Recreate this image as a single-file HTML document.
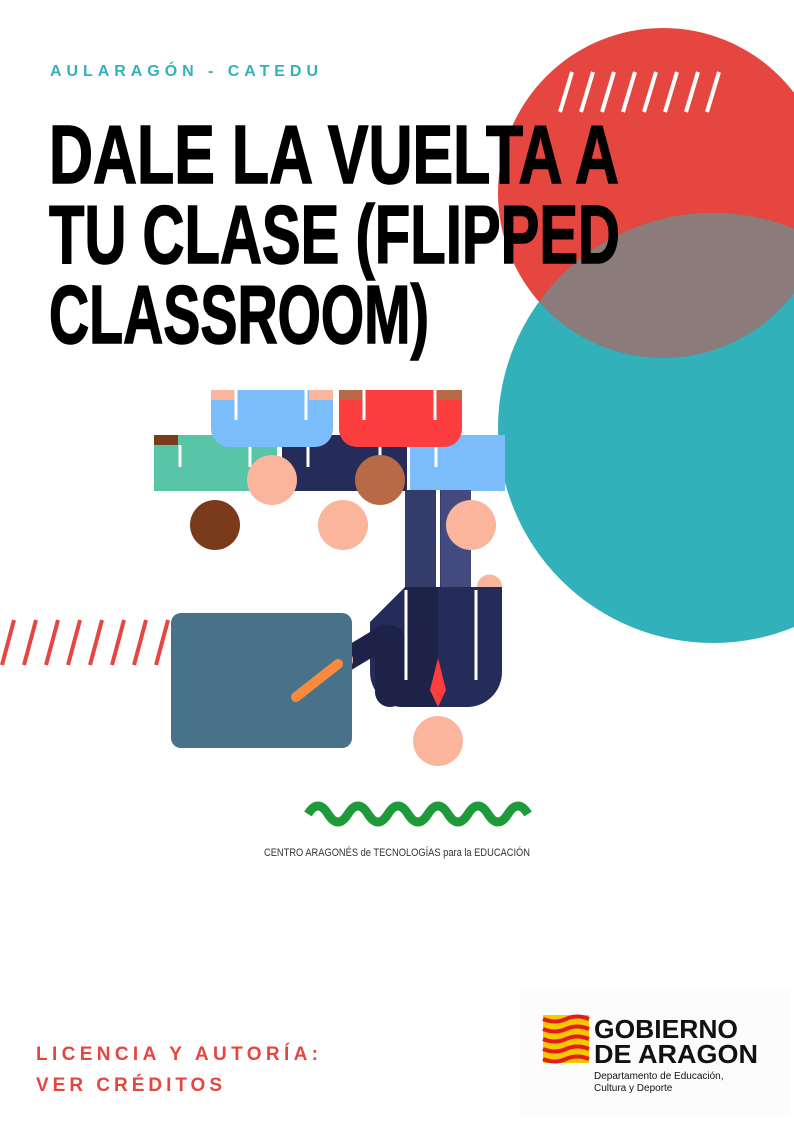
<!DOCTYPE html>
<html><head><meta charset="utf-8"><style>
body{margin:0;width:794px;height:1123px;overflow:hidden;background:#fff;font-family:"Liberation Sans",sans-serif}
</style></head><body>
<svg width="794" height="1123" viewBox="0 0 794 1123" style="position:absolute;left:0;top:0">
<defs><clipPath id="rc"><circle cx="663" cy="193" r="165"/></clipPath></defs>
<circle cx="663" cy="193" r="165" fill="#e5463f"/>
<circle cx="713" cy="428" r="215" fill="#33b1bb"/>
<circle cx="713" cy="428" r="215" fill="#8b7b7a" clip-path="url(#rc)"/>
<g stroke="#fff" stroke-width="4">
<line x1="560" y1="112" x2="572" y2="72"/><line x1="581" y1="112" x2="593" y2="72"/><line x1="602" y1="112" x2="614" y2="72"/><line x1="623" y1="112" x2="635" y2="72"/><line x1="644" y1="112" x2="656" y2="72"/><line x1="665" y1="112" x2="677" y2="72"/><line x1="686" y1="112" x2="698" y2="72"/><line x1="707" y1="112" x2="719" y2="72"/>
</g>
<g stroke="#e5463f" stroke-width="4">
<line x1="2" y1="665" x2="14" y2="620"/><line x1="24" y1="665" x2="36" y2="620"/><line x1="46" y1="665" x2="58" y2="620"/><line x1="68" y1="665" x2="80" y2="620"/><line x1="90" y1="665" x2="102" y2="620"/><line x1="112" y1="665" x2="124" y2="620"/><line x1="134" y1="665" x2="146" y2="620"/><line x1="156" y1="665" x2="168" y2="620"/><line x1="178" y1="665" x2="190" y2="620"/>
</g>
<text x="50" y="76" font-size="16" font-weight="bold" fill="#33b1bb" textLength="268" lengthAdjust="spacing">AULARAGÓN - CATEDU</text>
<g font-family="Liberation Sans, sans-serif" font-weight="bold" fill="#000" stroke="#000" stroke-width="1.5">
<text x="49" y="183" font-size="83" textLength="570" lengthAdjust="spacingAndGlyphs">DALE LA VUELTA A</text>
<text x="49" y="263" font-size="83" textLength="571" lengthAdjust="spacingAndGlyphs">TU CLASE (FLIPPED</text>
<text x="49" y="343" font-size="83" textLength="380" lengthAdjust="spacingAndGlyphs">CLASSROOM)</text>
</g>
<rect x="154" y="435" width="123" height="56" fill="#57c5a6"/><rect x="154" y="435" width="24" height="10" fill="#7a3b1c"/>
<rect x="282" y="435" width="125" height="56" fill="#262c5a"/>
<rect x="410" y="435" width="95" height="56" fill="#7bbcfb"/>
<rect x="211" y="390" width="122" height="57" rx="18" fill="#7bbcfb"/><rect x="211" y="390" width="122" height="20" fill="#7bbcfb"/>
<rect x="211" y="390" width="24" height="10" fill="#fbb59c"/><rect x="309" y="390" width="24" height="10" fill="#fbb59c"/>
<rect x="339" y="390" width="123" height="57" rx="18" fill="#fd3e3e"/><rect x="339" y="390" width="123" height="20" fill="#fd3e3e"/>
<rect x="339" y="390" width="24" height="10" fill="#b86a47"/><rect x="438" y="390" width="24" height="10" fill="#b86a47"/>
<g stroke="#fff" stroke-width="3"><line x1="236" y1="390" x2="236" y2="420"/><line x1="306" y1="390" x2="306" y2="420"/><line x1="364" y1="390" x2="364" y2="420"/><line x1="435" y1="390" x2="435" y2="420"/>
<line x1="180" y1="445" x2="180" y2="467"/><line x1="250" y1="447" x2="250" y2="467"/><line x1="308" y1="447" x2="308" y2="467"/><line x1="380" y1="447" x2="380" y2="467"/><line x1="436" y1="447" x2="436" y2="467"/></g>
<circle cx="272" cy="480" r="25" fill="#fbb59c"/><circle cx="380" cy="480" r="25" fill="#b86a47"/>
<circle cx="215" cy="525" r="25" fill="#7a3b1c"/><circle cx="343" cy="525" r="25" fill="#fbb59c"/>
<rect x="405" y="490" width="66" height="97" fill="#343d6a"/><rect x="441" y="490" width="30" height="97" fill="#434a80"/>
<line x1="438" y1="490" x2="438" y2="587" stroke="#fff" stroke-width="4"/>
<circle cx="471" cy="525" r="25" fill="#fbb59c"/>
<path d="M477 587a12 12 0 0 1 25 0z" fill="#fbb59c"/>
<path d="M405 587h97v85a35 35 0 0 1-35 35h-62a35 35 0 0 1-35-35v-50z" fill="#262c5a"/>
<rect x="405" y="587" width="33" height="120" fill="#1d2248"/>
<path d="M375 640v40a27 27 0 0 0 27 27h30z" fill="#1d2248"/>
<rect x="375" y="625" width="30" height="82" rx="15" fill="#1d2248"/>
<path d="M340 650l45-27 8 22-45 27z" fill="#1d2248"/>
<line x1="406" y1="590" x2="406" y2="680" stroke="#fff" stroke-width="3"/><line x1="476" y1="590" x2="476" y2="680" stroke="#fff" stroke-width="3"/>
<path d="M438 658l-8 32 8 17 8-17z" fill="#fd3e3e"/>
<circle cx="342" cy="660" r="11" fill="#fbb59c"/>
<circle cx="438" cy="741" r="25" fill="#fbb59c"/>
<rect x="171" y="613" width="181" height="135" rx="10" fill="#477289"/>
<line x1="296" y1="697" x2="338" y2="664" stroke="#fa8a3e" stroke-width="10" stroke-linecap="round"/>
<path d="M308 826 q10 -16 20 0 q10 16 20 0 q10 -16 20 0 q10 16 20 0 q10 -16 20 0 q10 16 20 0 q10 -16 20 0 q10 16 20 0 q10 -16 20 0 q10 16 20 0 q10 -16 20 0" stroke="#1e9a3a" stroke-width="9" fill="none" transform="translate(0,-12)"/>
<text x="264" y="856" font-size="11" fill="#333" font-family="Liberation Sans Narrow, Liberation Sans, sans-serif" textLength="266" lengthAdjust="spacingAndGlyphs">CENTRO ARAGONÉS de TECNOLOGÍAS para la EDUCACIÓN</text>
<text x="36" y="1060" font-size="19" font-weight="bold" fill="#e5463f" textLength="282" lengthAdjust="spacing">LICENCIA Y AUTORÍA:</text>
<text x="36" y="1091" font-size="19" font-weight="bold" fill="#e5463f" textLength="186" lengthAdjust="spacing">VER CRÉDITOS</text>
<rect x="520" y="990" width="270" height="125" fill="#fcfcfc"/>
<rect x="543" y="1015" width="46" height="48" fill="#f6c800"/>
<g stroke="#e51b1b" stroke-width="4" fill="none">
<path d="M543 1019q12 5 23 0t23 0"/><path d="M543 1029q12 5 23 0t23 0"/><path d="M543 1039q12 5 23 0t23 0"/><path d="M543 1049q12 5 23 0t23 0"/><path d="M543 1059q12 5 23 0t23 0"/></g>
<text x="594" y="1038" font-size="26" font-weight="bold" fill="#111" textLength="144" lengthAdjust="spacingAndGlyphs">GOBIERNO</text>
<text x="594" y="1063" font-size="26" font-weight="bold" fill="#111" textLength="164" lengthAdjust="spacingAndGlyphs">DE ARAGON</text>
<text x="594" y="1079" font-size="10" fill="#111">Departamento de Educación,</text>
<text x="594" y="1091" font-size="10" fill="#111">Cultura y Deporte</text>
</svg>
</body></html>
